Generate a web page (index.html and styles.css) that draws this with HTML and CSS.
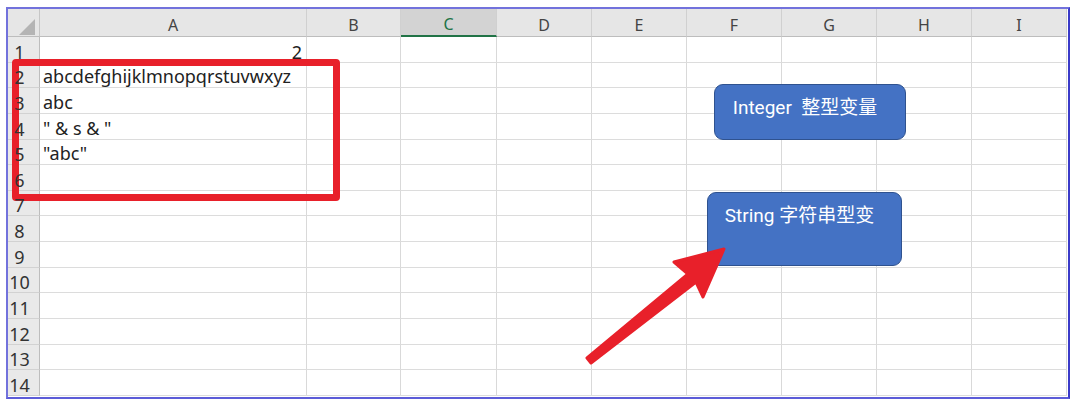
FILE: index.html
```html
<!DOCTYPE html>
<html>
<head>
<meta charset="utf-8">
<link rel="stylesheet" href="styles.css">
</head>
<body>
<div class="frame">
  <div class="sheet">
    <div class="corner"><span class="tri"></span></div>
    <div class="ch">A</div><div class="ch">B</div><div class="ch sel">C</div><div class="ch">D</div><div class="ch">E</div><div class="ch">F</div><div class="ch">G</div><div class="ch">H</div><div class="ch">I</div>

    <div class="rh"><span>1</span></div><div class="c num">2</div><div class="c"></div><div class="c"></div><div class="c"></div><div class="c"></div><div class="c"></div><div class="c"></div><div class="c"></div><div class="c"></div>
    <div class="rh"><span>2</span></div><div class="c">abcdefghijklmnopqrstuvwxyz</div><div class="c"></div><div class="c"></div><div class="c"></div><div class="c"></div><div class="c"></div><div class="c"></div><div class="c"></div><div class="c"></div>
    <div class="rh"><span>3</span></div><div class="c">abc</div><div class="c"></div><div class="c"></div><div class="c"></div><div class="c"></div><div class="c"></div><div class="c"></div><div class="c"></div><div class="c"></div>
    <div class="rh"><span>4</span></div><div class="c">&quot; &amp; s &amp; &quot;</div><div class="c"></div><div class="c"></div><div class="c"></div><div class="c"></div><div class="c"></div><div class="c"></div><div class="c"></div><div class="c"></div>
    <div class="rh"><span>5</span></div><div class="c">&quot;abc&quot;</div><div class="c"></div><div class="c"></div><div class="c"></div><div class="c"></div><div class="c"></div><div class="c"></div><div class="c"></div><div class="c"></div>
    <div class="rh"><span>6</span></div><div class="c"></div><div class="c"></div><div class="c"></div><div class="c"></div><div class="c"></div><div class="c"></div><div class="c"></div><div class="c"></div><div class="c"></div>
    <div class="rh"><span>7</span></div><div class="c"></div><div class="c"></div><div class="c"></div><div class="c"></div><div class="c"></div><div class="c"></div><div class="c"></div><div class="c"></div><div class="c"></div>
    <div class="rh"><span>8</span></div><div class="c"></div><div class="c"></div><div class="c"></div><div class="c"></div><div class="c"></div><div class="c"></div><div class="c"></div><div class="c"></div><div class="c"></div>
    <div class="rh"><span>9</span></div><div class="c"></div><div class="c"></div><div class="c"></div><div class="c"></div><div class="c"></div><div class="c"></div><div class="c"></div><div class="c"></div><div class="c"></div>
    <div class="rh"><span>10</span></div><div class="c"></div><div class="c"></div><div class="c"></div><div class="c"></div><div class="c"></div><div class="c"></div><div class="c"></div><div class="c"></div><div class="c"></div>
    <div class="rh"><span>11</span></div><div class="c"></div><div class="c"></div><div class="c"></div><div class="c"></div><div class="c"></div><div class="c"></div><div class="c"></div><div class="c"></div><div class="c"></div>
    <div class="rh"><span>12</span></div><div class="c"></div><div class="c"></div><div class="c"></div><div class="c"></div><div class="c"></div><div class="c"></div><div class="c"></div><div class="c"></div><div class="c"></div>
    <div class="rh"><span>13</span></div><div class="c"></div><div class="c"></div><div class="c"></div><div class="c"></div><div class="c"></div><div class="c"></div><div class="c"></div><div class="c"></div><div class="c"></div>
    <div class="rh"><span>14</span></div><div class="c"></div><div class="c"></div><div class="c"></div><div class="c"></div><div class="c"></div><div class="c"></div><div class="c"></div><div class="c"></div><div class="c"></div>
  </div>

  <div class="redbox"></div>
  <div class="shape shape-int">Integer&nbsp;&nbsp;整型变量</div>
  <div class="shape shape-str">String 字符串型变</div>
  <svg class="arrow" width="1060" height="388" viewBox="0 0 1060 388">
    <polygon points="716,240 666,253 680,265 579,349 583,354 688,273 695,288" fill="#e8202a" stroke="#e8202a" stroke-width="3" stroke-linejoin="round"/>
  </svg>
</div>
</body>
</html>
```

FILE: styles.css
```css
html, body {
  margin: 0;
  padding: 0;
  background: #ffffff;
}

.frame {
  position: relative;
  margin: 7px 0 0 6px;
  width: 1060px;
  height: 388px;
  border: 2px solid;
  border-color: #7272dc #3a3ac8 #5c5cd8 #7272dc;
  background: #ffffff;
  overflow: hidden;
}

.sheet {
  display: grid;
  grid-template-columns: 32px 267px 94px 96px repeat(6, 95px);
  grid-template-rows: 28px repeat(14, 25.65px);
  font-family: "Noto Sans", "Noto Sans CJK SC", sans-serif;
}

.sheet > div {
  box-sizing: border-box;
  display: flex;
  align-items: flex-end;
  line-height: 22px;
  white-space: nowrap;
  overflow: visible;
}

.corner {
  position: relative;
  background: #e6e6e6;
  border-right: 1px solid #c6c6c6;
  border-bottom: 1px solid #bdbdbd;
}

.tri {
  position: absolute;
  left: 11px;
  top: 10px;
  width: 16px;
  height: 16px;
  background: #b4b4b4;
  clip-path: polygon(100% 0, 100% 100%, 0 100%);
}

.ch {
  justify-content: center;
  background: #e6e6e6;
  border-right: 1px solid #d0d0d0;
  border-bottom: 1px solid #bdbdbd;
  color: #444444;
  font-size: 16px;
}

.ch.sel {
  background: #d3d3d3;
  color: #217346;
  border-bottom: 2px solid #217346;
}

.rh {
  justify-content: center;
  background: #e9e9e9;
  border-right: 1px solid #bdbdbd;
  border-bottom: 1px solid #d2d2d2;
  color: #333333;
  font-size: 18px;
  padding-right: 8px;
  padding-bottom: 0;
}

.rh span {
  position: relative;
  z-index: 2;
  top: 1px;
}

.c {
  border-right: 1px solid #d9d9d9;
  border-bottom: 1px solid #dcdcdc;
  color: #222222;
  font-size: 18px;
  padding-left: 3px;
  padding-bottom: 0;
}

.c.num {
  justify-content: flex-end;
  padding-right: 4px;
}

.c, .c.num {
  line-height: 19px;
}

.redbox {
  position: absolute;
  z-index: 1;
  left: 4px;
  top: 50px;
  width: 328px;
  height: 142px;
  box-sizing: border-box;
  border: 7px solid #e8202a;
  border-radius: 4px;
}

.shape {
  position: absolute;
  z-index: 3;
  box-sizing: border-box;
  background: #4472c4;
  border: 1.5px solid #2f528f;
  border-radius: 9px;
  color: #ffffff;
  font-family: Roboto, "Noto Sans CJK SC", sans-serif;
  font-size: 19px;
  text-align: center;
  white-space: nowrap;
}

.shape-int {
  left: 706px;
  top: 75px;
  width: 192px;
  height: 56px;
  line-height: 46px;
  padding-right: 10px;
}

.shape-str {
  left: 699px;
  top: 183px;
  width: 195px;
  height: 74px;
  padding-top: 9px;
  padding-right: 10px;
  line-height: 28px;
}

.arrow {
  position: absolute;
  z-index: 4;
  left: 0;
  top: 0;
}
```
